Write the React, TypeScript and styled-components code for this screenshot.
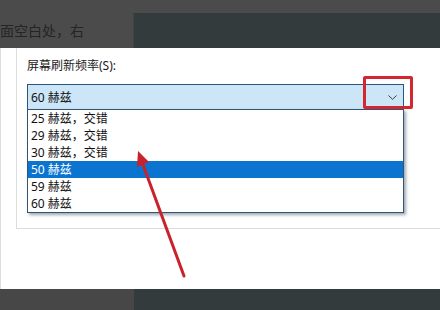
import React from 'react';
import styled, { createGlobalStyle } from 'styled-components';

const GlobalStyle = createGlobalStyle`
  html, body {
    margin: 0;
    padding: 0;
    background: #ffffff;
  }
  body {
    font-family: 'Noto Sans', 'Noto Sans CJK SC', sans-serif;
  }
`;

const rates = [
  { label: '25 赫兹，交错', selected: false },
  { label: '29 赫兹，交错', selected: false },
  { label: '30 赫兹，交错', selected: false },
  { label: '50 赫兹', selected: true },
  { label: '59 赫兹', selected: false },
  { label: '60 赫兹', selected: false },
];

export default function App() {
  return (
    <>
      <GlobalStyle />
      <Page>
        <TopBar>
          <HintPane>
            <HintText>面空白处，右</HintText>
          </HintPane>
          <DarkPanel />
        </TopBar>

        <Dialog>
          <GroupBox>
            <FieldLabel>屏幕刷新频率(S):</FieldLabel>
            <ComboWrap>
              <Combo>
                <span>60 赫兹</span>
                <Chevron width='9' height='5' viewBox='0 0 9 5'>
                  <path d='M0.5 0.5 L4.5 4.3 L8.5 0.5' fill='none' stroke='#3c3c3c' strokeWidth='1' />
                </Chevron>
              </Combo>
              <OptionList>
                {rates.map((r) => (
                  <Option key={r.label} $selected={r.selected}>
                    {r.label}
                  </Option>
                ))}
              </OptionList>
              <Highlight />
            </ComboWrap>
          </GroupBox>
        </Dialog>

        <BottomBar>
          <BottomLeft />
          <BottomRight />
        </BottomBar>

        <ArrowLayer width='440' height='310' viewBox='0 0 440 310'>
          <line x1='184' y1='276' x2='142' y2='162' stroke='#c8232d' strokeWidth='3' strokeLinecap='round' />
          <polygon points='138,151 149,162 137,167' fill='#c8232d' />
        </ArrowLayer>
      </Page>
    </>
  );
}

const Page = styled.div`
  position: relative;
  width: 440px;
  height: 310px;
  display: flex;
  flex-direction: column;
  overflow: hidden;
`;

const TopBar = styled.div`
  height: 48px;
  display: flex;
  background: #4b4b4b;
`;

const HintPane = styled.div`
  width: 133px;
  display: flex;
  align-items: center;
  padding-top: 14px;
  box-sizing: border-box;
  overflow: hidden;
`;

const HintText = styled.div`
  font-size: 14px;
  line-height: 16px;
  color: #252525;
  white-space: nowrap;
`;

const DarkPanel = styled.div`
  flex: 1;
  margin-top: 13px;
  background: #343b3c;
  border-left: 1px solid #3f4545;
`;

const Dialog = styled.div`
  flex: 1;
  background: #ffffff;
  border-left: 1px solid #dcdcdc;
  padding-left: 15px;
`;

const GroupBox = styled.div`
  height: 181px;
  box-sizing: border-box;
  border: 1px solid #dcdcdc;
  border-top: none;
  border-right: none;
  padding: 10px 0 0 10px;
`;

const FieldLabel = styled.div`
  font-size: 12px;
  line-height: 16px;
  color: #1a1a1a;
`;

const ComboWrap = styled.div`
  position: relative;
  margin-top: 10px;
  width: 377px;
`;

const Combo = styled.div`
  height: 26px;
  box-sizing: border-box;
  display: flex;
  align-items: center;
  justify-content: space-between;
  padding: 0 6px 0 3px;
  background: #cce6f8;
  border: 1px solid #2a5480;
  font-size: 12px;
  color: #111111;
`;

const Chevron = styled.svg`
  display: block;
`;

const OptionList = styled.div`
  position: absolute;
  left: 0;
  top: 25px;
  width: 377px;
  box-sizing: border-box;
  background: #ffffff;
  border: 1px solid #2f5679;
  box-shadow: 2px 2px 3px rgba(40, 60, 80, 0.45);
`;

const Option = styled.div<{ $selected: boolean }>`
  height: 17px;
  line-height: 17px;
  padding-left: 3px;
  font-size: 12px;
  color: ${(p) => (p.$selected ? '#ffffff' : '#111111')};
  background: ${(p) => (p.$selected ? '#0a74d0' : 'transparent')};
  white-space: nowrap;
`;

const Highlight = styled.div`
  position: absolute;
  left: 336px;
  top: -8px;
  width: 50px;
  height: 33px;
  box-sizing: border-box;
  border: 3px solid #d4262f;
  border-radius: 2px;
`;

const BottomBar = styled.div`
  height: 21px;
  display: flex;
`;

const BottomLeft = styled.div`
  width: 134px;
  background: #474747;
`;

const BottomRight = styled.div`
  flex: 1;
  background: #333b3c;
`;

const ArrowLayer = styled.svg`
  position: absolute;
  left: 0;
  top: 0;
  pointer-events: none;
`;
